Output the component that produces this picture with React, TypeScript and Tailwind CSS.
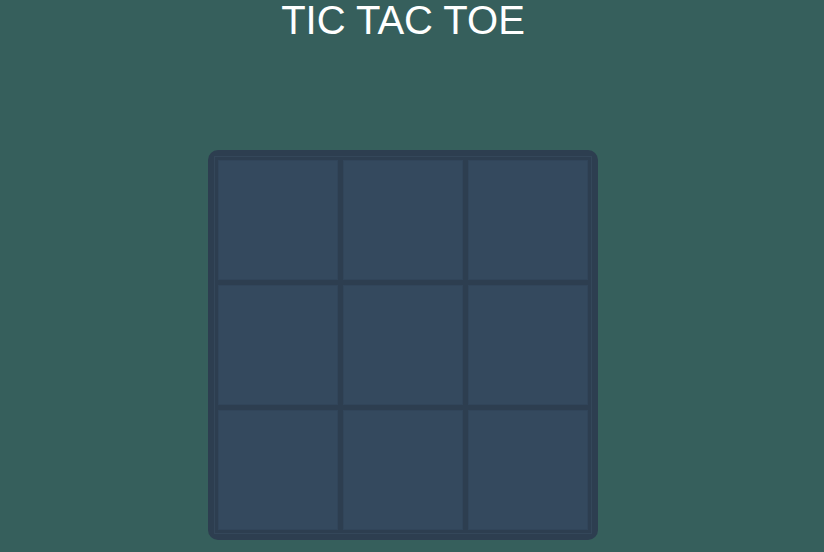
export default function App() {
  const cells = Array.from({ length: 9 })

  return (
    <div className="min-h-[552px] w-full bg-[#365f5c] pr-[18px] font-['Liberation_Sans',Arial,sans-serif]">
      <div className="flex flex-col items-center">
        <h1 className="text-[40px] leading-none font-normal text-white">TIC TAC TOE</h1>
        <div className="mt-[110px] rounded-[10px] bg-[#2d3e50] p-[6px]">
          <div className="grid grid-cols-[120px_120px_120px] grid-rows-[120px_120px_120px] gap-[5px] border border-[#34475a] p-[3px]">
            {cells.map((_, i) => (
              <div key={i} className="bg-[#34495e] border border-[#31455a]" />
            ))}
          </div>
        </div>
      </div>
    </div>
  )
}
